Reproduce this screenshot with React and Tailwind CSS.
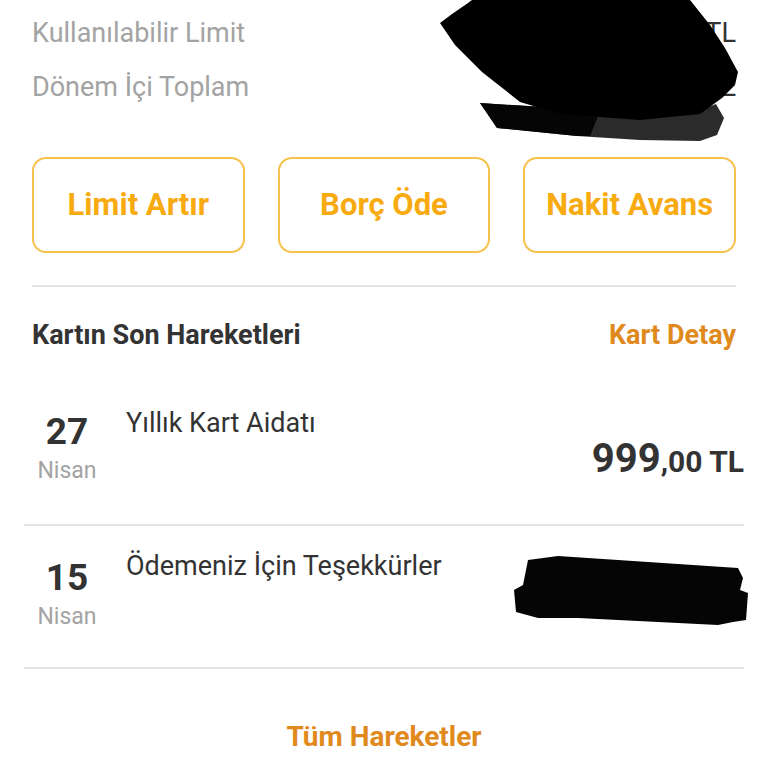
import React from 'react';

const rows = [
  { day: '27', month: 'Nisan', title: 'Yıllık Kart Aidatı', amount: '999', cents: ',00 TL' },
  { day: '15', month: 'Nisan', title: 'Ödemeniz İçin Teşekkürler', hidden: true },
];

function TopScribble() {
  return (
    <svg
      className="absolute left-[430px] top-0"
      width="320"
      height="150"
      viewBox="430 0 320 150"
    >
      <path d="M480,103 L560,108 L640,112 L700,110 L716,104 L724,118 L717,135 L700,141 L640,140 L577,136 L497,128 Z" fill="#2b2b2b" />
      <path d="M480,103 L560,108 L600,111 L590,136 L577,136 L497,128 Z" fill="#050505" />
      <path d="M440,23 L452,14 L468,3 L472,0 L690,0 L710,25 L725,48 L738,72 L735,85 L722,98 L700,114 L640,120 L560,114 L520,102 L482,72 L455,45 Z" fill="#000" />
    </svg>
  );
}

function RowScribble() {
  return (
    <svg width="237" height="75" viewBox="515 553 237 75" className="-mr-[6px] mt-[27px] self-start">
      <path d="M530,560 L560,556 L740,568 L745,578 L742,590 L750,593 L748,620 L735,622 L720,625 L580,618 L540,618 L518,612 L516,590 L525,585 Z" fill="#050505" />
    </svg>
  );
}

export default function App() {
  return (
    <div className="relative w-[768px] h-[768px] overflow-hidden bg-white font-['Roboto',sans-serif]">
      {/* limit summary */}
      <div className="px-8 pt-[6px]">
        <div className="flex h-[54px] items-center justify-between">
          <span className="text-[27px] text-[#a3a3a3]">Kullanılabilir Limit</span>
          <span className="text-[27px] text-[#333]">TL</span>
        </div>
        <div className="flex h-[54px] items-center justify-between">
          <span className="text-[27px] text-[#a3a3a3]">Dönem İçi Toplam</span>
          <span className="text-[27px] text-[#333]">TL</span>
        </div>
      </div>
      <TopScribble />

      {/* actions */}
      <div className="mt-[43px] grid grid-cols-3 gap-[33px] px-8">
        {['Limit Artır', 'Borç Öde', 'Nakit Avans'].map(label => (
          <button
            key={label}
            className="flex h-[96px] items-center justify-center rounded-[14px] border-2 border-[#f6c14c] text-[31px] font-bold text-[#f7ab10]"
          >
            {label}
          </button>
        ))}
      </div>

      <div className="mx-8 mt-[32px] h-[2px] bg-[#e4e4e4]" />

      <div className="flex h-[96px] items-center justify-between px-8">
        <span className="text-[27px] font-bold text-[#333]">Kartın Son Hareketleri</span>
        <span className="text-[27px] font-bold text-[#e08a1e]">Kart Detay</span>
      </div>

      {/* transactions */}
      <div className="px-[24px]">
        {rows.map((row, i) => (
          <div key={row.day} className="flex h-[143px] border-b-2 border-[#e4e4e4]">
            <div className={`flex w-[86px] flex-col items-center ${i === 0 ? 'pt-[29px]' : 'pt-[32px]'}`}>
              <span className="text-[37px] font-bold leading-[40px] text-[#333]">{row.day}</span>
              <span className="mt-[6px] text-[23px] leading-[26px] text-[#a3a3a3]">{row.month}</span>
            </div>
            <div className="ml-[16px] flex-1 pt-[24px] text-[27px] leading-[32px] text-[#333]">{row.title}</div>
            {row.hidden ? (
              <RowScribble />
            ) : (
              <div className="mt-[52px] self-start font-bold text-[#333] leading-[48px]">
                <span className="text-[40px]">{row.amount}</span>
                <span className="text-[30px]">{row.cents}</span>
              </div>
            )}
          </div>
        ))}
      </div>

      <div className="flex justify-center pt-[47px]">
        <span className="text-[28px] font-bold text-[#e08a1e]">Tüm Hareketler</span>
      </div>
    </div>
  );
}
